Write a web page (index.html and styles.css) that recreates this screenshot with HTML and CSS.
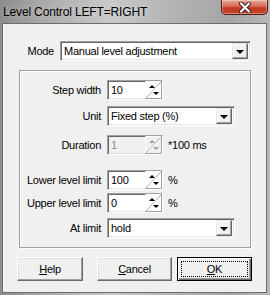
FILE: index.html
```html
<!DOCTYPE html>
<html>
<head lang="en">
  <meta charset="UTF-8">
  <title>Level Control</title>
  <link rel="stylesheet" href="styles.css">
</head>
<body>
<div class="window">
  <div class="titlebar">
    <span class="title">Level Control LEFT=RIGHT</span>
    <span class="close-btn">
      <svg width="16" height="11" viewBox="0 0 16 11">
        <path d="M4 1.5 L12 9.5 M12 1.5 L4 9.5" stroke="#3a1a14" stroke-width="4" stroke-linecap="round"/>
        <path d="M4 1.5 L12 9.5 M12 1.5 L4 9.5" stroke="#ffffff" stroke-width="2.2" stroke-linecap="round"/>
      </svg>
    </span>
  </div>

  <div class="client">
    <div class="mode-row">
      <label>Mode</label>
      <div class="combo combo-mode"><span class="combo-text">Manual level adjustment</span><span class="drop"><i></i></span></div>
    </div>

    <div class="group">
      <div class="row row-step">
        <label>Step width</label>
        <div class="spin"><span class="spin-text">10</span><span class="arrows"></span></div>
      </div>
      <div class="row row-unit">
        <label>Unit</label>
        <div class="combo combo-short"><span class="combo-text">Fixed step (%)</span><span class="drop"><i></i></span></div>
      </div>
      <div class="row row-duration">
        <label>Duration</label>
        <div class="spin disabled"><span class="spin-text">1</span><span class="arrows"></span></div>
        <span class="unit">*100 ms</span>
      </div>
      <div class="row row-lower">
        <label>Lower level limit</label>
        <div class="spin"><span class="spin-text">100</span><span class="arrows"></span></div>
        <span class="unit">%</span>
      </div>
      <div class="row row-upper">
        <label>Upper level limit</label>
        <div class="spin"><span class="spin-text">0</span><span class="arrows"></span></div>
        <span class="unit">%</span>
      </div>
      <div class="row row-limit">
        <label>At limit</label>
        <div class="combo combo-short"><span class="combo-text">hold</span><span class="drop"><i></i></span></div>
      </div>
    </div>

    <div class="buttons">
      <a class="btn btn-help" href="javascript:void(0);"><u>H</u>elp</a>
      <a class="btn btn-cancel" href="javascript:void(0);"><u>C</u>ancel</a>
      <a class="btn btn-ok" href="javascript:void(0);"><span class="focus"><u>O</u>K</span></a>
    </div>
  </div>
</div>

<script>
  // draw the little diagonal up/down arrows into every spin box
  var arrows = document.querySelectorAll(".arrows");
  for (var i = 0; i < arrows.length; i++) {
    var dis = arrows[i].parentNode.className.indexOf("disabled") > -1;
    var col = dis ? "#a0a0a0" : "#000000";
    arrows[i].innerHTML =
      '<svg width="17" height="18" viewBox="0 0 17 18">' +
      '<path d="M0.5 17.5 L0.5 0.5 L16.5 0.5" fill="none" stroke="#ffffff"/>' +
      '<path d="M0.5 17.5 L16.5 0.5" fill="none" stroke="#a0a0a0"/>' +
      '<path d="M1.5 17.5 L16.5 1.5" fill="none" stroke="#ffffff"/>' +
      '<path d="M16.5 0.5 L16.5 17.5 L0.5 17.5" fill="none" stroke="#a0a0a0"/>' +
      '<path d="M4 7 L7 4 L10 7 Z" fill="' + col + '"/>' +
      '<path d="M8 11 L14 11 L11 14 Z" fill="' + col + '"/>' +
      '</svg>';
  }
</script>
</body>
</html>
```

FILE: styles.css
```css
html, body {
  margin: 0px;
  padding: 0px;
}

body {
  width: 270px;
  height: 295px;
  overflow: hidden;
  font-family: "Liberation Sans", Arial, sans-serif;
  font-size: 11px;
  letter-spacing: -0.25px;
  color: #000000;
}

a {
  text-decoration: none;
  color: #000000;
}

label {
  display: block;
  color: #000000;
}

.window {
  width: 270px;
  height: 295px;
  display: flex;
  flex-direction: column;
  background: linear-gradient(90deg, #8c8c8c 0px, #a8a8a8 40px, #c9c9c9 110px, #b4b4b4 170px, #a5a5a5 230px, #b8b8b8 270px);
}

.titlebar {
  height: 23px;
  display: flex;
  align-items: flex-start;
}

.title {
  padding: 5px 0px 0px 3px;
  font-size: 12px;
  letter-spacing: -0.15px;
  color: #000000;
  text-shadow: 0px 0px 6px rgba(255, 255, 255, 0.5);
}

.close-btn {
  margin-left: auto;
  margin-right: 2px;
  width: 45px;
  height: 14px;
  border: 1px solid #4a1c16;
  border-top: 0px;
  border-radius: 0px 0px 5px 5px;
  background: linear-gradient(180deg, #e7a596 0px, #d86e58 6px, #c2381f 8px, #c84a2e 15px);
  box-shadow: inset 0px 0px 0px 1px rgba(255, 255, 255, 0.35);
  display: flex;
  align-items: center;
  justify-content: center;
}

.client {
  margin: 0px 3px 2px 2px;
  height: 268px;
  border: 1px solid #6e6e6e;
  background: #f0f0f0;
}

/* mode row */
.mode-row {
  display: flex;
  align-items: center;
  margin: 17px 0px 0px 23px;
}

.mode-row label {
  width: 28px;
  margin-right: 6px;
  text-align: right;
}

/* classic sunken boxes */
.combo, .spin {
  box-sizing: border-box;
  background: #ffffff;
  border-top: 1px solid #a0a0a0;
  border-left: 1px solid #a0a0a0;
  border-right: 1px solid #ffffff;
  border-bottom: 1px solid #ffffff;
  box-shadow: inset 1px 1px 0px #696969, inset -1px -1px 0px #e3e3e3;
  display: flex;
  align-items: center;
  padding: 2px;
}

.combo {
  height: 20px;
}

.combo-mode {
  width: 191px;
}

.combo-short {
  width: 128px;
}

.combo-text {
  flex: 1;
  padding-left: 1px;
}

.drop {
  width: 16px;
  height: 16px;
  box-sizing: border-box;
  background: #f0f0f0;
  border-top: 1px solid #e3e3e3;
  border-left: 1px solid #e3e3e3;
  border-right: 1px solid #696969;
  border-bottom: 1px solid #696969;
  box-shadow: inset -1px -1px 0px #a0a0a0, inset 1px 1px 0px #ffffff;
  display: flex;
  align-items: center;
  justify-content: center;
}

.drop i {
  width: 0px;
  height: 0px;
  border-left: 4px solid transparent;
  border-right: 4px solid transparent;
  border-top: 4px solid #000000;
  margin-top: 1px;
}

/* group box */
.group {
  margin: 9px 0px 0px 16px;
  width: 232px;
  height: 178px;
  box-sizing: border-box;
  border: 1px solid #a0a0a0;
  box-shadow: 1px 1px 0px #ffffff, inset 1px 1px 0px #ffffff;
  padding-top: 9px;
}

.row {
  display: flex;
  align-items: center;
}

.row label {
  width: 81px;
  margin-right: 6px;
  text-align: right;
}

.row-unit {
  margin-top: 6px;
}

.row-duration {
  margin-top: 9px;
}

.row-lower {
  margin-top: 15px;
}

.row-upper {
  margin-top: 3px;
}

.row-limit {
  margin-top: 5px;
}

.spin {
  width: 56px;
  height: 20px;
  padding: 0px 0px 0px 2px;
}

.spin-text {
  flex: 1;
  padding-left: 1px;
}

.spin.disabled {
  background: #f0f0f0;
}

.spin.disabled .spin-text {
  color: #8d8d8d;
}

.arrows {
  width: 17px;
  height: 18px;
  display: flex;
}

.unit {
  margin-left: 5px;
}

/* buttons */
.buttons {
  display: flex;
  align-items: flex-start;
  margin: 9px 0px 0px 14px;
}

.btn {
  box-sizing: border-box;
  height: 24px;
  width: 66px;
  margin-right: 14px;
  background: #f0f0f0;
  border-top: 1px solid #ffffff;
  border-left: 1px solid #ffffff;
  border-right: 1px solid #696969;
  border-bottom: 1px solid #696969;
  box-shadow: inset -1px -1px 0px #a0a0a0, inset 1px 1px 0px #e3e3e3;
  display: flex;
  align-items: center;
  justify-content: center;
}

.btn-cancel {
  width: 75px;
  margin-right: 5px;
}

.btn-ok {
  width: 75px;
  border: 1px solid #000000;
  box-shadow: inset 1px 1px 0px #ffffff, inset -1px -1px 0px #696969, inset -2px -2px 0px #a0a0a0;
  padding: 3px;
}

.focus {
  flex: 1;
  align-self: stretch;
  border: 1px dotted #000000;
  display: flex;
  align-items: center;
  justify-content: center;
}
```
